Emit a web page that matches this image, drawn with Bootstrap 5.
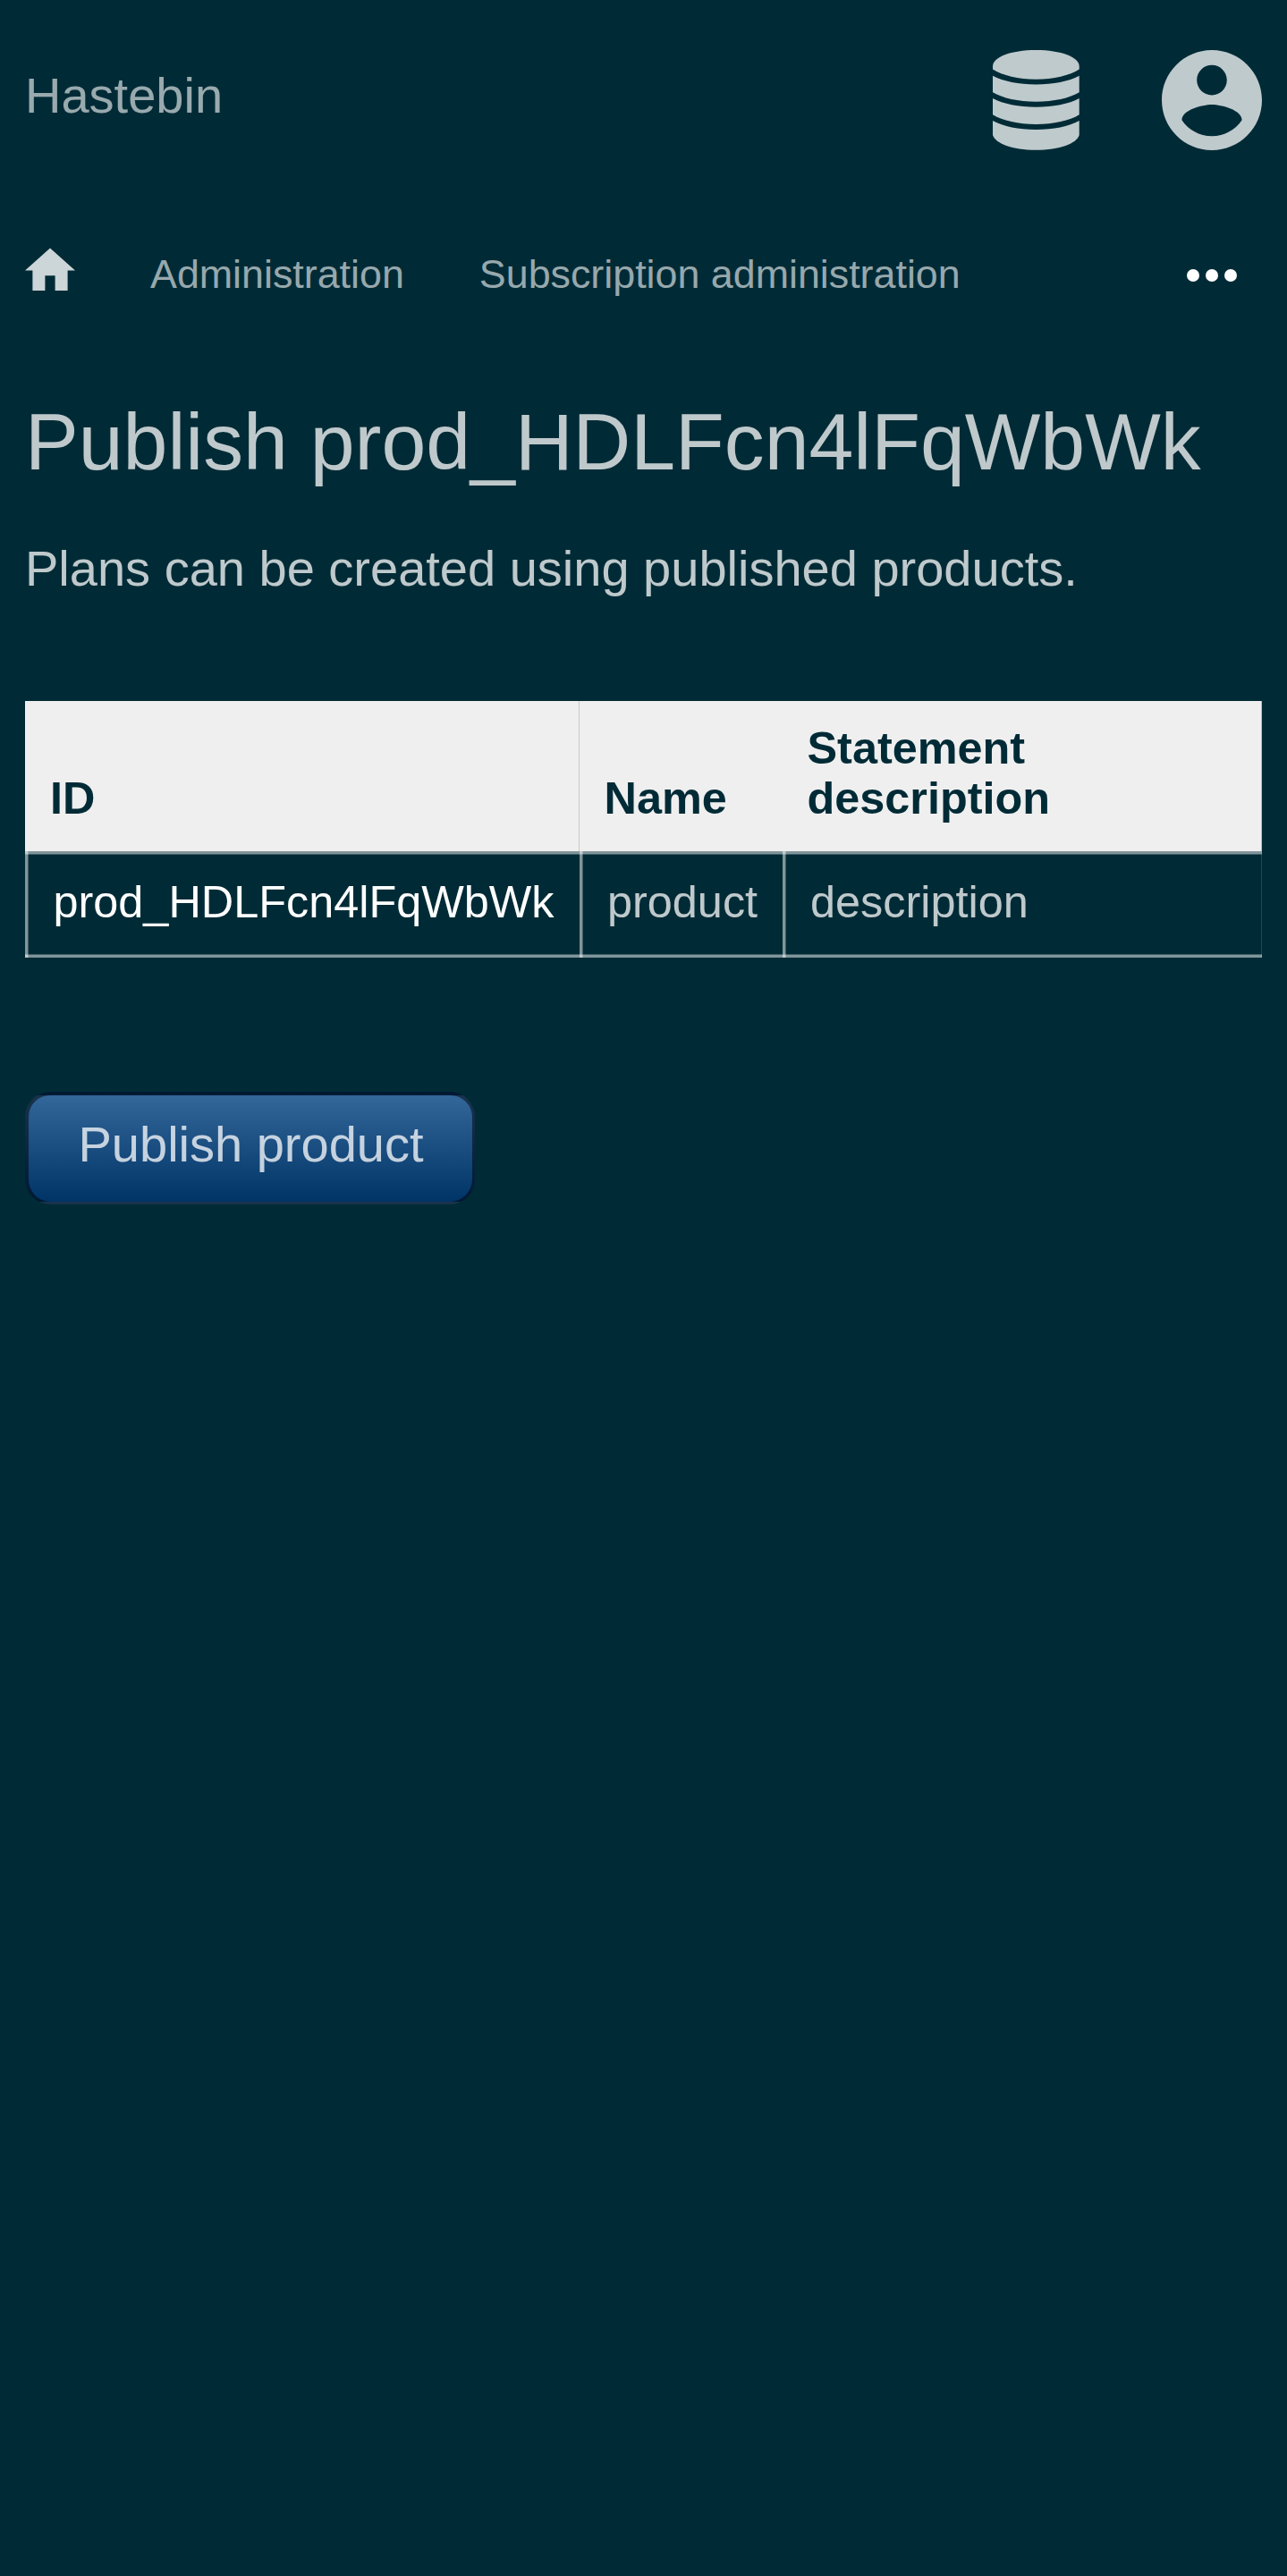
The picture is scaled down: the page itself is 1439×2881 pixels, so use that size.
<!DOCTYPE html>
<html lang="en">
<head>
<meta charset="utf-8">
<meta name="viewport" content="width=device-width, initial-scale=1">
<title>Publish product</title>
<link href="https://cdn.jsdelivr.net/npm/bootstrap@5.3.0/dist/css/bootstrap.min.css" rel="stylesheet">
<style>
  body { background: #002b36; color: rgba(255,255,255,.75); font-family: "Liberation Sans", Arial, sans-serif; font-size: 56px; line-height: 67px; min-height: 2881px; }
  .page { padding: 0 28px; }
  .topbar { padding: 56px 0 0; height: 224px; }
  .site-name { color: rgba(255,255,255,.6); padding-top: 17px; }
  .site-name:hover { color: #fff; }
  .top-icons { gap: 92px; color: #bfcacd; }
  .crumbs { height: 216px; padding: 55px 28px 0 0; font-size: 44.8px; line-height: 54px; }
  .crumbs a { color: rgba(255,255,255,.6); }
  .crumbs .home-link { margin: -2px 84px 0 0; color: #ccd5d7; }
  .crumbs .sub-link { margin-left: 84px; }
  .crumbs .home-link svg, .top-icons svg, .more svg { display: block; }
  .crumbs .more { color: #fff; padding-top: 22px; }
  .page-title { font-size: 89.6px; line-height: 108px; font-weight: 400; margin: 0 0 54px; white-space: nowrap; }
  .intro { margin: 0 0 115px; }
  .products { width: 1383px; table-layout: fixed; border-collapse: separate; border-spacing: 0; font-size: 50.4px; line-height: 56px; margin-bottom: 150px; }
  .products th { background: #efefef; color: #002b36; height: 168px; padding: 25px 27.5px 31px; vertical-align: bottom; font-weight: 700; }
  .products th:first-child { padding-left: 28px; box-shadow: inset -1px 0 #c8c8c8; }
  .products th:last-child { padding-right: 200px; box-shadow: inset -1px 0 #b3bfc2; }
  .products td { height: 119px; padding: 29px 0 34px 31px; white-space: nowrap;
    background:
      linear-gradient(rgba(255,255,255,.5) 3px, rgba(255,255,255,.25) 3px) 0 0 / 100% 4px no-repeat,
      linear-gradient(rgba(255,255,255,.25) 1px, rgba(255,255,255,.5) 1px) 0 100% / 100% 4px no-repeat,
      linear-gradient(90deg, rgba(255,255,255,.5) 3px, rgba(255,255,255,.25) 3px) 0 0 / 4px 100% no-repeat; }
  .products td:first-child { padding-left: 31.5px; }
  .products td:last-child { box-shadow: inset -1px 0 rgba(255,255,255,.14); }
  .products td a { color: #fff; }
  .publish-btn { width: 503px; height: 126px; padding: 21px 0 31px 55.5px; text-align: left; font: inherit; color: rgba(255,255,255,.75);
    border: solid rgba(0,0,0,.5); border-width: 4px 3px 3px 4px; border-radius: 28px; background: linear-gradient(#336699, #003366); }
</style>
</head>
<body>
<div class="page">
  <header class="topbar d-flex justify-content-between align-items-start">
    <a class="site-name text-decoration-none" href="#">Hastebin</a>
    <div class="top-icons d-flex">
      <a class="text-reset" href="#" aria-label="Administration menu">
        <svg width="97" height="112" viewBox="0 0 97 112" fill="currentColor">
          <path d="M0 18C0 8 20 0 48.3 0S96.7 8 96.7 18V21.6C86 28.5 68 32.8 48.3 32.8S11 28.5 0 21.6Z"/>
          <path d="M0 28.8C12 35 29 38.5 48.3 38.5S85 35 96.7 28.8V47.3C86 53.8 68 57.7 48.3 57.7S11 53.8 0 47.3Z"/>
          <path d="M0 54C12 60.2 29 63.7 48.3 63.7S85 60.2 96.7 54V72.3C86 79 68 83 48.3 83S11 79 0 72.3Z"/>
          <path d="M0 79C12 85.4 29 89 48.3 89S85 85.4 96.7 79V95C94 104.500 75 111.800 48.300 111.800S3 104.500 0 95Z"/>
        </svg>
      </a>
      <a class="text-reset" href="#" aria-label="Account menu">
        <svg width="112" height="112" viewBox="2 2 20 20" fill="currentColor"><path d="M12 2C6.480 2 2 6.480 2 12s4.480 10 10 10 10-4.480 10-10S17.520 2 12 2zm0 3c1.660 0 3 1.340 3 3s-1.340 3-3 3-3-1.340-3-3 1.340-3 3-3zm0 14.200c-2.500 0-4.710-1.280-6-3.220.03-1.990 4-3.080 6-3.080 1.990 0 5.970 1.090 6 3.080-1.290 1.940-3.500 3.220-6 3.220z"/></svg>
      </a>
    </div>
  </header>

  <nav class="crumbs d-flex align-items-start">
    <a class="home-link" href="#" aria-label="Home"><svg width="56" height="48" viewBox="2 2.860 20 17.140" fill="currentColor"><path d="M10 20v-6h4v6h5v-8h3L12 3 2 12h3v8z"/></svg></a>
    <a class="text-decoration-none" href="#">Administration</a>
    <a class="sub-link text-decoration-none" href="#">Subscription administration</a>
    <a class="more ms-auto" href="#" aria-label="More"><svg width="56" height="14" viewBox="0 0 56 14" fill="currentColor"><circle cx="7" cy="7" r="7"/><circle cx="28" cy="7" r="7"/><circle cx="49" cy="7" r="7"/></svg></a>
  </nav>

  <main>
    <h1 class="page-title">Publish prod_HDLFcn4lFqWbWk</h1>
    <p class="intro">Plans can be created using published products.</p>
    <table class="products">
      <colgroup><col style="width:620px"><col style="width:227px"><col style="width:536px"></colgroup>
      <thead><tr><th>ID</th><th>Name</th><th>Statement description</th></tr></thead>
      <tbody><tr><td><a class="text-decoration-none" href="#">prod_HDLFcn4lFqWbWk</a></td><td>product</td><td>description</td></tr></tbody>
    </table>
    <button type="submit" class="publish-btn d-block">Publish product</button>
  </main>
</div>
<script src="https://cdn.jsdelivr.net/npm/bootstrap@5.3.0/dist/js/bootstrap.bundle.min.js"></script>
</body>
</html>
